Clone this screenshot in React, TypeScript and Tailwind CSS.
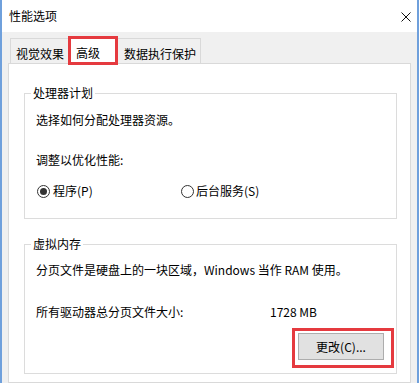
import React from "react";

function Radio({ checked }: { checked?: boolean }) {
  return (
    <span className="w-[13px] h-[13px] rounded-full border border-[#333333] bg-white flex items-center justify-center shrink-0">
      {checked ? <span className="w-[7px] h-[7px] rounded-full bg-[#333333]" /> : null}
    </span>
  );
}

export default function App() {
  return (
    <div className="w-[419px] h-[383px] overflow-hidden flex flex-col border-x-2 border-[#6fa0dc] bg-[#f0f0f0] text-[12px] leading-[16px] text-black font-['Noto_Sans_CJK_SC','Noto_Sans',sans-serif]">
      {/* Title bar */}
      <div className="h-[32px] shrink-0 bg-white flex items-center justify-between pl-[7px] pr-[6px]">
        <span className="pb-[1px]">性能选项</span>
        <svg width="10" height="10" viewBox="0 0 10 10" className="mt-[1px]">
          <path d="M0.5 0.5 L9.5 9.5 M9.5 0.5 L0.5 9.5" stroke="#111" strokeWidth="1" fill="none" />
        </svg>
      </div>

      {/* Body */}
      <div className="flex-1 flex flex-col px-[6px] pt-[4px]">
        {/* Tabs */}
        <div className="flex items-end pl-[2px] h-[27px]">
          <div className="w-[58px] h-[25px] border-l border-t border-[#d9d9d9] bg-[#f0f0f0] pl-[5px] pt-[7px]">
            视觉效果
          </div>
          <div className="relative z-10 w-[50px] h-[28px] -mb-[1px] border-x border-t border-[#d9d9d9] bg-white pl-[7px] pt-[8px]">
            高级
            <span className="absolute -left-[1px] -top-[1px] w-[50px] h-[29px] border-[3px] border-[#e53a3f]" />
          </div>
          <div className="w-[83px] h-[25px] border-r border-t border-[#d9d9d9] bg-[#f0f0f0] pl-[6px] pt-[7px]">
            数据执行保护
          </div>
        </div>

        {/* Tab panel */}
        <div className="flex-1 bg-white border border-[#d9d9d9] flex flex-col pl-[15px] pr-[13px]">
          <fieldset className="mt-[21px] border border-[#dcdcdc] pl-[11px] pr-[12px] pb-[19px]">
            <legend className="-ml-[5px] px-[2px] leading-[16px]">处理器计划</legend>
            <p className="mt-[11px]">选择如何分配处理器资源。</p>
            <p className="mt-[24px]">调整以优化性能:</p>
            <div className="mt-[15px] h-[16px] flex items-center pl-[1px]">
              <div className="w-[144px] flex items-center gap-[3px]">
                <Radio checked />
                <span>程序(P)</span>
              </div>
              <div className="flex items-center gap-[2px]">
                <Radio />
                <span>后台服务(S)</span>
              </div>
            </div>
          </fieldset>

          <fieldset className="mt-[17px] border border-[#dcdcdc] pl-[11px] pr-[12px] pb-[13px]">
            <legend className="-ml-[5px] px-[2px] leading-[16px]">虚拟内存</legend>
            <p className="mt-[10px]">分页文件是硬盘上的一块区域，Windows 当作 RAM 使用。</p>
            <div className="mt-[26px] grid grid-cols-[234px_auto]">
              <span>所有驱动器总分页文件大小:</span>
              <span>1728 MB</span>
            </div>
            <div className="mt-[13px] flex justify-end">
              <button className="relative w-[86px] h-[27px] border border-[#adadad] bg-[#e1e1e1] flex items-center justify-center">
                更改(C)...
                <span className="absolute -left-[7px] -top-[6px] w-[102px] h-[40px] border-[3px] border-[#e53a3f]" />
              </button>
            </div>
          </fieldset>
        </div>
      </div>
    </div>
  );
}
